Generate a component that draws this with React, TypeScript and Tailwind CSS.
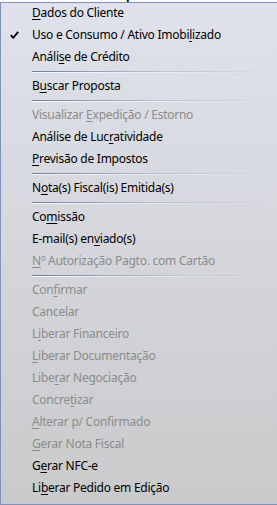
type Item =
  | { kind: "sep" }
  | { kind: "item"; label: string; mn?: number; disabled?: boolean; checked?: boolean };

const items: Item[] = [
  { kind: "item", label: "Dados do Cliente", mn: 0 },
  { kind: "item", label: "Uso e Consumo / Ativo Imobilizado", mn: 27, checked: true },
  { kind: "item", label: "Análise de Crédito", mn: 5 },
  { kind: "sep" },
  { kind: "item", label: "Buscar Proposta", mn: 1 },
  { kind: "sep" },
  { kind: "item", label: "Visualizar Expedição / Estorno", mn: 11, disabled: true },
  { kind: "item", label: "Análise de Lucratividade", mn: 14 },
  { kind: "item", label: "Previsão de Impostos", mn: 0 },
  { kind: "sep" },
  { kind: "item", label: "Nota(s) Fiscal(is) Emitida(s)", mn: 1 },
  { kind: "sep" },
  { kind: "item", label: "Comissão", mn: 2 },
  { kind: "item", label: "E-mail(s) enviado(s)", mn: 12 },
  { kind: "item", label: "Nº Autorização Pagto. com Cartão", mn: 0, disabled: true },
  { kind: "sep" },
  { kind: "item", label: "Confirmar", mn: 3, disabled: true },
  { kind: "item", label: "Cancelar", disabled: true },
  { kind: "item", label: "Liberar Financeiro", mn: 1, disabled: true },
  { kind: "item", label: "Liberar Documentação", mn: 0, disabled: true },
  { kind: "item", label: "Liberar Negociação", mn: 4, disabled: true },
  { kind: "item", label: "Concretizar", mn: 6, disabled: true },
  { kind: "item", label: "Alterar p/ Confirmado", mn: 0, disabled: true },
  { kind: "item", label: "Gerar Nota Fiscal", mn: 0, disabled: true },
  { kind: "item", label: "Gerar NFC-e", mn: 1 },
  { kind: "item", label: "Liberar Pedido em Edição", mn: 2 },
];

function Label({ text, mn }: { text: string; mn?: number }) {
  if (mn === undefined) return <span>{text}</span>;
  return (
    <span>
      {text.slice(0, mn)}
      <span className="underline underline-offset-[2px]">{text[mn]}</span>
      {text.slice(mn + 1)}
    </span>
  );
}

function Check() {
  return (
    <svg width="9" height="8" viewBox="0 0 9 8" className="ml-[9px]">
      <path d="M0.8 4.2 L3.2 6.8 L8.2 0.8" fill="none" stroke="#000" strokeWidth="1.8" />
    </svg>
  );
}

export default function App() {
  return (
    <div className="w-[277px] h-[505px] overflow-hidden bg-white font-['Noto_Sans','Open_Sans',sans-serif]">
      {/* bottom edge of the grid header behind the menu */}
      <div className="h-[2px] overflow-hidden bg-white">
        <div className="-mt-[11px] flex text-[12px] leading-[13px] font-bold text-black">
          <span className="ml-[34px]">Paises</span>
          <span className="ml-[44px]">Tipo de Pedido</span>
          <span className="ml-[94px]">Peso</span>
        </div>
      </div>
      <div className="h-[503px] overflow-hidden border-t border-l border-b border-[#8191b9] bg-gradient-to-b from-[#dfe2eb] to-[#c9cacb] text-[12px] tracking-[-0.25px]">
        <div className="-mt-px">
          {items.map((it, i) =>
            it.kind === "sep" ? (
              <div key={i} className="h-[7px] flex flex-col justify-center pl-[31px]">
                <div className="h-px bg-gradient-to-r from-[#6f7ea6] via-[#b9bfd1] to-transparent" />
                <div className="h-px bg-gradient-to-r from-white/80 to-transparent" />
              </div>
            ) : (
              <div
                key={i}
                className={`h-[22px] flex items-center ${it.disabled ? "text-[#8c8c8c]" : "text-black"}`}
              >
                <div className="w-[31px] flex items-center">{it.checked && <Check />}</div>
                <Label text={it.label} mn={it.mn} />
              </div>
            )
          )}
        </div>
      </div>
    </div>
  );
}
